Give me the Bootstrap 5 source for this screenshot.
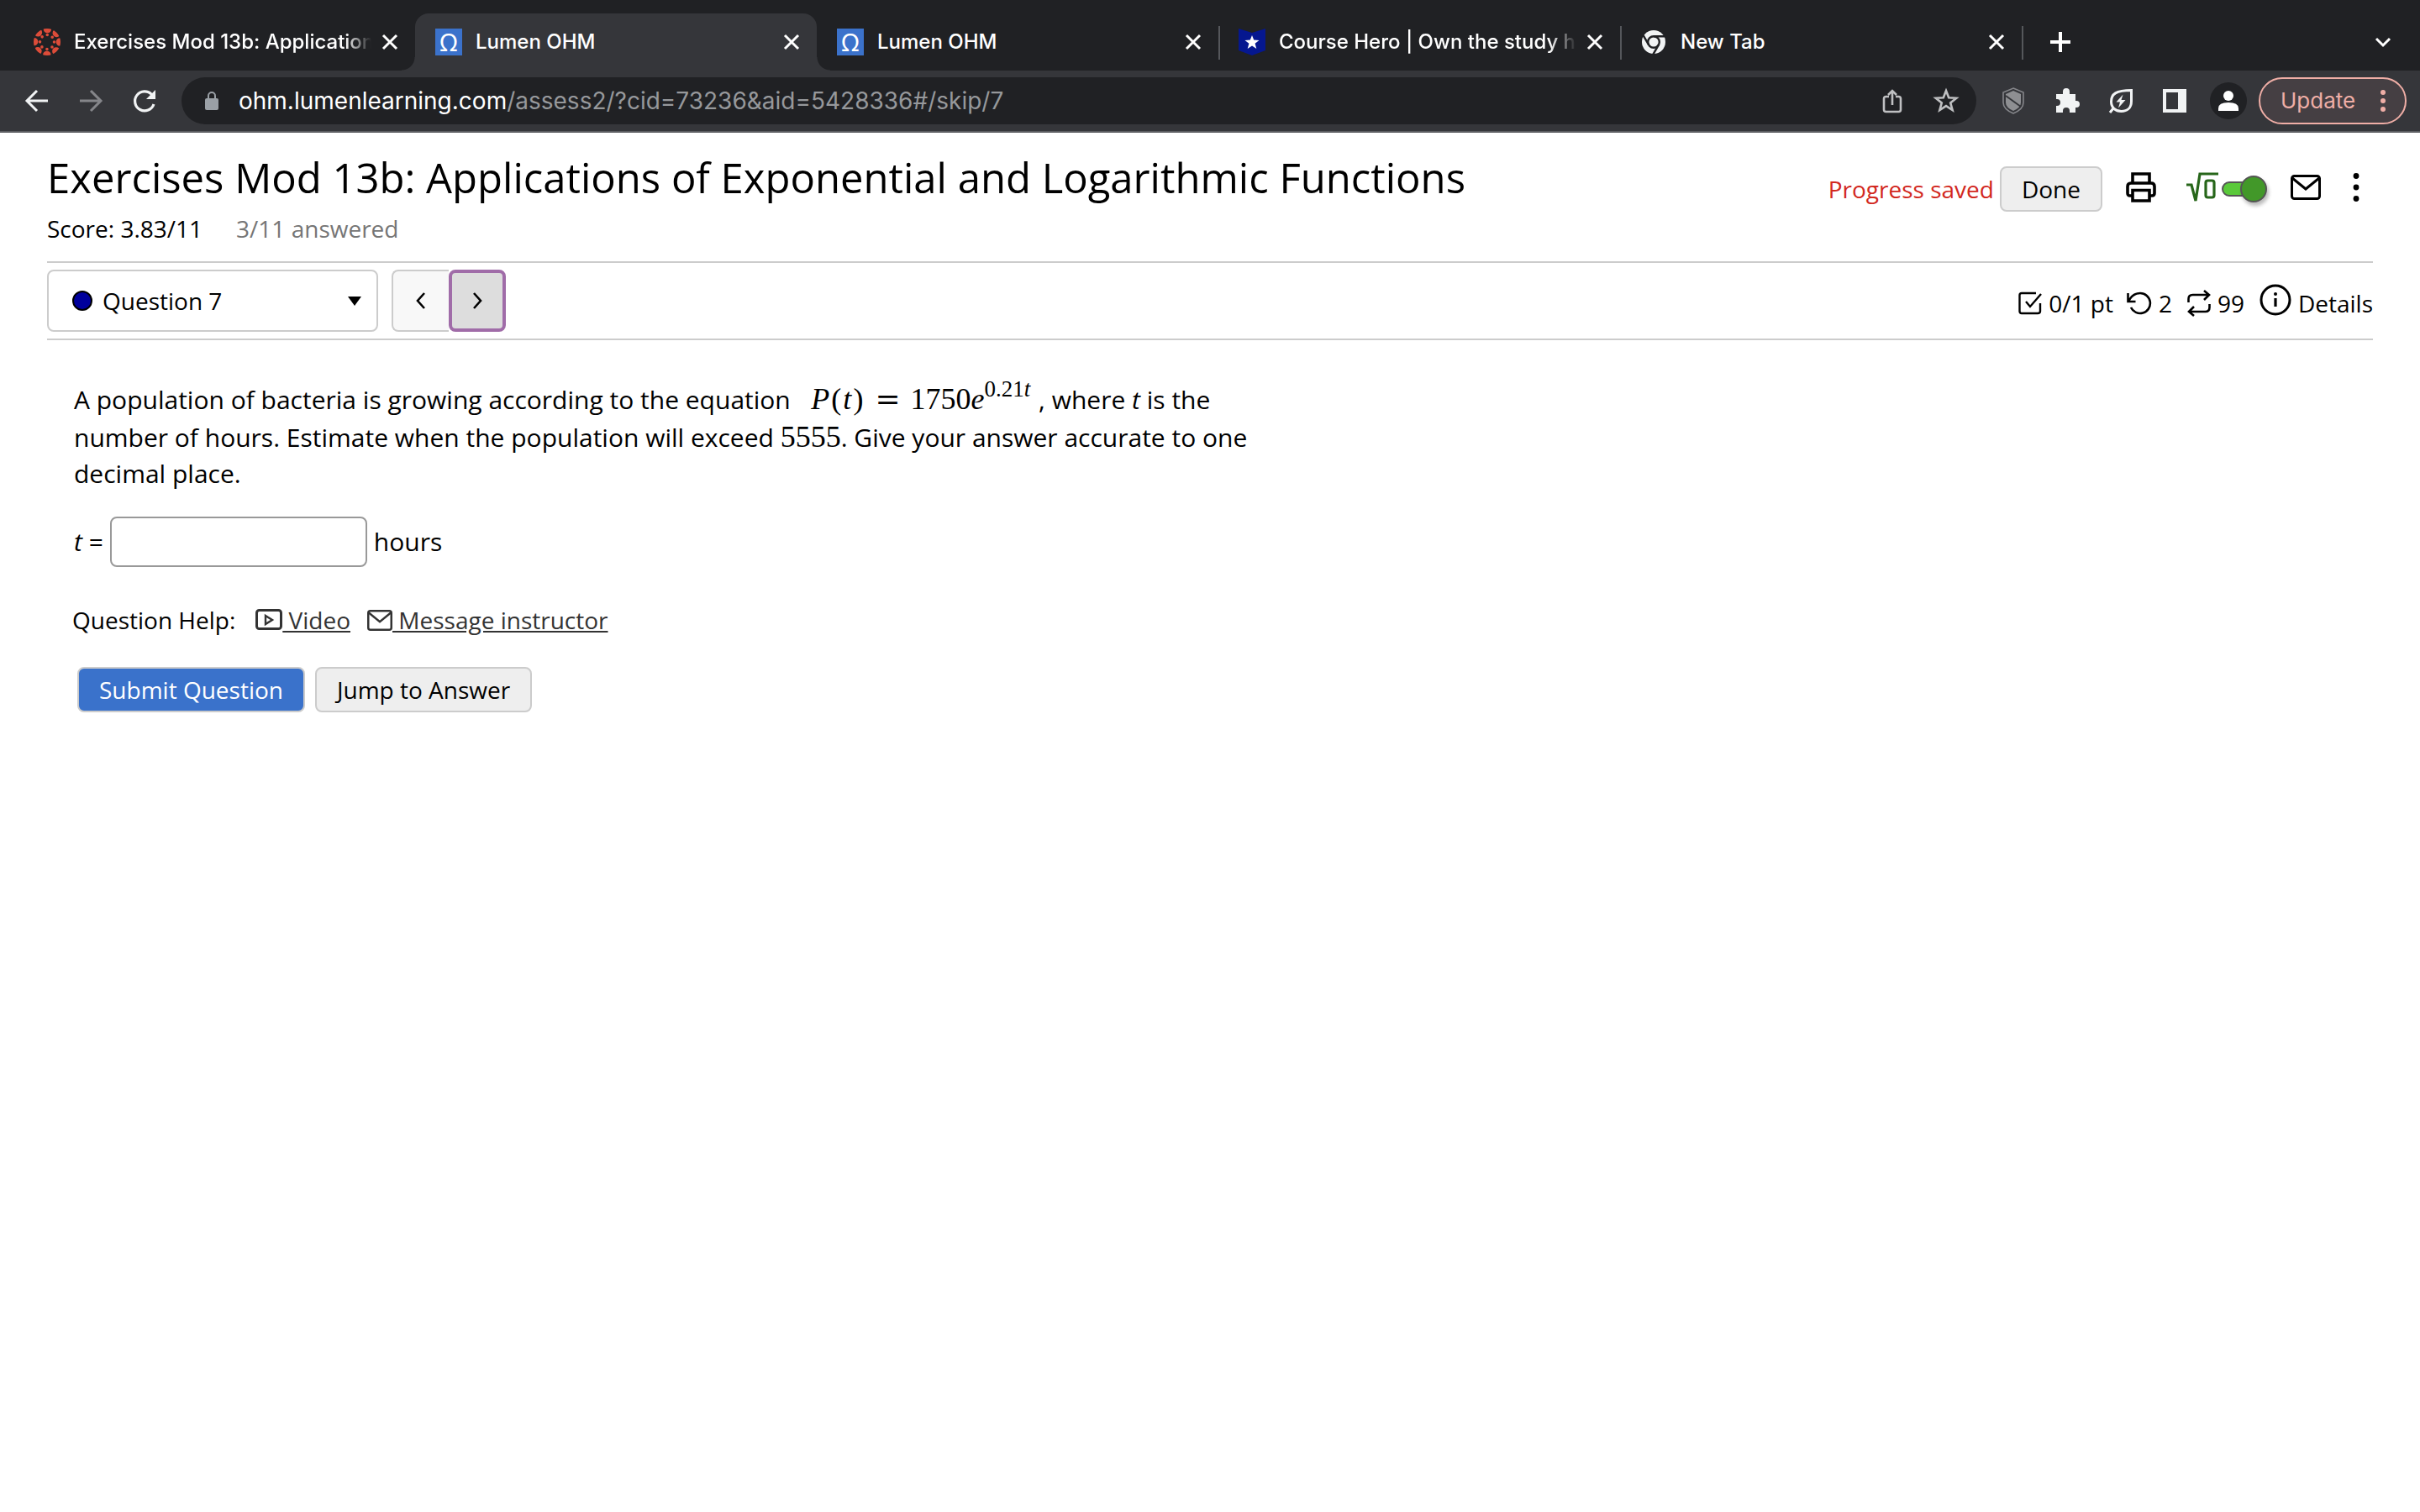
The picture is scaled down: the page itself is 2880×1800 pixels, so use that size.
<!DOCTYPE html>
<html lang="en">
<head>
<meta charset="utf-8">
<meta name="viewport" content="width=device-width, initial-scale=1">
<title>Lumen OHM</title>
<link rel="stylesheet" href="https://cdn.jsdelivr.net/npm/bootstrap@5.3.0/dist/css/bootstrap.min.css">
<style>
body{font-family:"Open Sans","Noto Sans",sans-serif;font-size:28px;line-height:40px;color:#000;background:#fff}
svg{display:block;flex:none}
.chrome{font-family:Inter,Roboto,sans-serif;color:#fff;background:#202124}
.tabstrip{padding:16px 16px 0;height:84px}
.tab{width:478px;height:68px;padding:0 20px 0 24px;gap:16px;font-size:24px;font-weight:500;position:relative}
.tab .caption{flex:1;min-width:0;overflow:hidden;white-space:nowrap}
.tab .caption.faded{margin-right:-4px;-webkit-mask-image:linear-gradient(90deg,#000 91%,transparent);mask-image:linear-gradient(90deg,#000 91%,transparent)}
.tab.current{background:#35363a;border-radius:16px 16px 0 0}
.tab.current::before,.tab.current::after{content:"";position:absolute;bottom:0;width:16px;height:16px}
.tab.current::before{left:-16px;background:radial-gradient(circle at 0 0,transparent 15px,#35363a 16px)}
.tab.current::after{right:-16px;background:radial-gradient(circle at 100% 0,transparent 15px,#35363a 16px)}
.tab.ruled::after{content:"";position:absolute;right:-2px;top:15px;width:2px;height:40px;background:#55575b}
.plain{background:none;border:0;padding:0;color:inherit;display:flex;align-items:center;justify-content:center}
.tab .plain{width:20px;height:32px}
.omega{width:32px;height:32px;background:#3b72cb;font:400 29px/32px "Noto Sans",sans-serif;text-align:center}
.toolbar{height:74px;background:#35363a;border-bottom:2px solid #5c5d61;padding:0 16px 0 12px}
.toolbar .plain{width:64px;height:56px}
.omnibox{height:56px;border-radius:28px;background:#202124;margin:0 12px;padding:0 4px 0 28px;font-size:28px}
.omnibox .rest{color:#96989b}
.avatar{width:44px;height:44px;border-radius:50%;background:#202124;overflow:hidden}
.update{height:56px;width:176px;border:2px solid #efaea6;border-radius:28px;background:#453f43;color:#efaea6;font-size:26px;padding:0 22px 0 24px}
.page{padding:0 56px}
.pagehead{padding:23px 0 19px}
.pagehead h1{font-size:49px;line-height:60px;font-weight:400;margin:0 0 11px}
.soft{color:#767676;margin-left:40px}
.headtools{padding-top:17px}
.headtools .plain{height:54px;padding-bottom:4px}
.saved{color:#d2281e;margin-right:7px}
.btn.act{font-size:28px;line-height:40px;padding:5px 24px;border:2px solid #ccc;border-radius:8px;background:#eee;color:#000}
.btn.act.go{background:#3a72cb;color:#fff}
.rootswitch{appearance:none;width:54px;height:32px;margin:0;position:relative}
.rootswitch::before{content:"";position:absolute;left:0;top:7px;width:44px;height:18px;border:2px solid #555;border-radius:9px;background:#5ac93a}
.rootswitch::after{content:"";position:absolute;right:0;top:0;width:32px;height:32px;border:2px solid #555;border-radius:50%;background:#429829;box-shadow:2px 4px 4px #0004}
.dots{margin-right:10px}
.qbar{border:solid #ccc;border-width:2px 0;padding:8px 0}
.picker{width:394px;height:74px;border:2px solid #ccc;border-radius:8px;padding:0 18px 0 28px;gap:12px}
.picker select{appearance:none;border:0;background:none;flex:1;padding:0;color:#000}
.step{width:68px;height:74px;border:2px solid #ccc;background:#f8f8f8}
.step.prev{border-right:0;border-radius:8px 0 0 8px}
.step.next{background:#ddd;border:4px solid #a06ca8;border-radius:8px}
.status{gap:8px;padding-top:6px}
.status .lead-in{margin-left:10px}
.question{padding:45px 32px 0;font-size:30px;line-height:42px}
.question p{max-width:1420px;margin:0}
.tex{font-family:"Liberation Serif",serif;font-size:36px;line-height:45px;white-space:nowrap}
.tex.formula{margin:0 2px 0 9px}
.tex sup{font-size:27px;line-height:1;top:auto;vertical-align:15px}
.tex .rel{font-family:"DejaVu Serif",serif;line-height:1;margin:0 12px}
.tex .arg{margin:0 2px}
.answer{width:306px;height:60px;border:2px solid #999;border-radius:8px}
.answerrow{padding-top:30px}
.help{padding:43px 0 36px 30px}
.help a{color:#333}
.help .mailto{margin-left:20px}
</style>
<script src="https://cdn.jsdelivr.net/npm/bootstrap@5.3.0/dist/js/bootstrap.bundle.min.js"></script>
</head>
<body>
<svg width="0" height="0" class="position-absolute" aria-hidden="true">
<symbol id="x" viewBox="6 6 20 20"><path d="M8 8l16 16M24 8L8 24" stroke="#fff" stroke-width="3" fill="none"/></symbol>
<symbol id="mail" viewBox="0 0 36 30"><rect x="1.500" y="1.500" width="33" height="27" rx="3" fill="none" stroke="currentColor" stroke-width="3"/><path d="M2 4l16 13L34 4" fill="none" stroke="currentColor" stroke-width="3"/></symbol>
</svg>
<header class="chrome">
<nav class="tabstrip d-flex" aria-label="Tabs">
<div class="tab d-flex align-items-center">
<svg class="rounded-circle" width="32" height="32" viewBox="0 0 32 32" fill="none" stroke="#dc4c39" stroke-linecap="round"><circle cx="16" cy="16" r="15.500" stroke-width="9.600" stroke-dasharray="0 12.174"/><circle cx="16" cy="16" r="8.500" stroke-width="3.600" stroke-dasharray="0 6.676"/></svg>
<span class="caption faded">Exercises Mod 13b: Applications</span>
<button class="plain" aria-label="Close tab"><svg width="20" height="20"><use href="#x"/></svg></button>
</div>
<div class="tab current d-flex align-items-center">
<span class="omega">Ω</span><span class="caption">Lumen OHM</span>
<button class="plain" aria-label="Close tab"><svg width="20" height="20"><use href="#x"/></svg></button>
</div>
<div class="tab ruled d-flex align-items-center">
<span class="omega">Ω</span><span class="caption">Lumen OHM</span>
<button class="plain" aria-label="Close tab"><svg width="20" height="20"><use href="#x"/></svg></button>
</div>
<div class="tab ruled d-flex align-items-center">
<svg width="32" height="32" viewBox="0 0 32 32"><path d="M0 0l16 5L32 0v26l-16 6-16-6z" fill="#05178f"/><path d="M16 8l2.200 5.600 6.300.3-4.900 3.900 1.700 6.200-5.300-3.500-5.300 3.500 1.700-6.200-4.900-3.900 6.300-.3z" fill="#fff"/></svg>
<span class="caption faded">Course Hero | Own the study hour</span>
<button class="plain" aria-label="Close tab"><svg width="20" height="20"><use href="#x"/></svg></button>
</div>
<div class="tab ruled d-flex align-items-center">
<svg width="32" height="32" viewBox="0 0 32 32"><circle cx="16" cy="16" r="14" fill="#f1f3f4"/><circle cx="16" cy="16" r="6.800" fill="none" stroke="#202124" stroke-width="2.400"/><path d="M16 9.200h13M10.100 19.400L3.600 8.200M21.900 19.400L15.400 30.600" stroke="#202124" stroke-width="2.400"/></svg>
<span class="caption">New Tab</span>
<button class="plain" aria-label="Close tab"><svg width="20" height="20"><use href="#x"/></svg></button>
</div>
<div class="d-flex flex-fill align-items-center justify-content-between ps-4 pe-2">
<button class="plain ms-1" aria-label="New tab"><svg width="36" height="36" viewBox="0 0 36 36"><path d="M18 6v24M6 18h24" stroke="#fff" stroke-width="4"/></svg></button>
<button class="plain me-1" aria-label="Search tabs"><svg width="32" height="32" viewBox="0 0 32 32"><path d="M8 12l8 8 8-8" stroke="#fff" stroke-width="3" fill="none"/></svg></button>
</div>
</nav>
<div class="toolbar d-flex align-items-center">
<button class="plain" aria-label="Back"><svg width="32" height="32" viewBox="0 0 32 32"><path d="M29 16H5M16 4L4 16l12 12" stroke="#f1f3f4" stroke-width="3" fill="none"/></svg></button>
<button class="plain" aria-label="Forward"><svg width="32" height="32" viewBox="0 0 32 32"><path d="M3 16h24M16 4l12 12-12 12" stroke="#85868a" stroke-width="3" fill="none"/></svg></button>
<button class="plain" aria-label="Reload"><svg width="32" height="32" viewBox="0 0 32 32"><path d="M27 20a11.500 11.500 0 1 1-2.500-11.500" stroke="#f1f3f4" stroke-width="3.200" fill="none"/><path d="M29 3v11H18z" fill="#f1f3f4"/></svg></button>
<div class="omnibox d-flex align-items-center flex-fill">
<svg width="16" height="24" viewBox="0 0 16 24"><rect y="9" width="16" height="14" rx="2" fill="#9aa0a6"/><path d="M4 10V6a4 4 0 0 1 8 0v4" fill="none" stroke="#9aa0a6" stroke-width="2"/></svg>
<div class="flex-fill ms-4" role="textbox" aria-label="Address">ohm.lumenlearning.com<span class="rest">/assess2/?cid=73236&amp;aid=5428336#/skip/7</span></div>
<button class="plain" aria-label="Share"><svg width="24" height="32" viewBox="0 0 24 32"><path d="M8 11H4.500q-2.500 0-2.500 2.500v13Q2 29 4.500 29h15q2.500 0 2.500-2.500v-13Q22 11 19.500 11H16M12 21V4M7 9l5-5 5 5" fill="none" stroke="#bfc0c2" stroke-width="2.600"/></svg></button>
<button class="plain" aria-label="Bookmark"><svg width="32" height="32" viewBox="0 0 32 32"><path d="M16 4l3.200 8.300 9 .5-7 5.600 2.400 8.600-7.600-4.900L8.400 27l2.400-8.600-7-5.600 9-.5z" fill="none" stroke="#bfc0c2" stroke-width="2.600"/></svg></button>
</div>
<button class="plain" aria-label="Shield"><svg width="26" height="32" viewBox="0 0 26 32"><path d="M13 1l12 5v12q0 8-12 13Q1 26 1 18V6z" fill="none" stroke="#85868a" stroke-width="1.600"/><path d="M13 4l9 4v10q0 6-9 10-9-4-9-10V8z" fill="#8e8f92"/><path d="M4 10l18 13" stroke="#35363a" stroke-width="2"/></svg></button>
<button class="plain" aria-label="Extensions"><svg width="32" height="32" viewBox="0 0 32 32"><path d="M3 8h8V5a4 4 0 0 1 8 0v3h7v8h1a4 4 0 0 1 0 8h-1v6h-7v-2a4 4 0 0 0-8 0v2H3v-8h1a4 4 0 0 0 0-8H3z" fill="#f1f3f4"/></svg></button>
<button class="plain" aria-label="Energy saver"><svg width="32" height="32" viewBox="0 0 32 32"><path d="M28.500 3.500v13c0 8-5 12-12 12S4.500 24 4.500 17C4.500 8 10 3.500 28.500 3.500zM7 25l-4 5" fill="none" stroke="#f1f3f4" stroke-width="3"/><path d="M18.500 8.500l-8 9h4.500l-2 7 8.500-9.500h-5z" fill="#f1f3f4"/></svg></button>
<button class="plain" aria-label="Side panel"><svg width="28" height="28" viewBox="0 0 28 28"><path d="M0 0h28v28H0zM4 4v20h14V4z" fill="#f1f3f4" fill-rule="evenodd"/></svg></button>
<button class="plain" aria-label="Profile"><svg class="avatar" width="44" height="44" viewBox="0 0 44 44"><circle cx="22" cy="16" r="6" fill="#fff"/><path d="M10 34v-3q0-7 12-7t12 7v3z" fill="#fff"/></svg></button>
<button class="update d-flex align-items-center justify-content-between ms-1">Update<svg width="8" height="28" viewBox="0 0 8 28" fill="#efaea6"><circle cx="4" cy="4" r="3"/><circle cx="4" cy="14" r="3"/><circle cx="4" cy="24" r="3"/></svg></button>
</div>
</header>
<main class="page">
<div class="pagehead d-flex justify-content-between align-items-start">
<div>
<h1>Exercises Mod 13b: Applications of Exponential and Logarithmic Functions</h1>
<div class="d-flex"><span>Score: 3.83/11</span><span class="soft">3/11 answered</span></div>
</div>
<div class="headtools d-flex align-items-center">
<span class="saved">Progress saved</span>
<button class="btn act">Done</button>
<button class="plain ms-4 ps-1" aria-label="Print"><svg width="36" height="36" viewBox="0 0 36 36" fill="none" stroke="#000" stroke-width="3.600"><path d="M8 12V2h20v10M8 28H5q-3 0-3-3v-8q0-4 4-4h24q4 0 4 4v8q0 3-3 3h-3M8 21.500h20V34H8z"/></svg></button>
<label class="d-flex align-items-center ms-4 ps-2"><svg class="ms-1 mb-1" width="38" height="36" viewBox="0 0 38 36" fill="none" stroke="#27661a" stroke-width="3.200"><path d="M0 15h6l5 19 5-32h22"/><rect x="23" y="10" width="10" height="20" rx="2.500"/></svg><span class="visually-hidden">Equation editor</span><input class="rootswitch ms-1" type="checkbox" role="switch" checked></label>
<button class="plain ms-4 ps-1" aria-label="Messages"><svg width="36" height="30"><use href="#mail"/></svg></button>
<button class="plain ms-4 ps-2" aria-label="More"><svg class="dots" width="20" height="36" viewBox="0 0 20 36"><circle cx="10" cy="4.500" r="3.400"/><circle cx="10" cy="18" r="3.400"/><circle cx="10" cy="31.500" r="3.400"/></svg></button>
</div>
</div>
<div class="qbar d-flex justify-content-between align-items-center">
<div class="d-flex">
<div class="picker d-flex align-items-center me-3">
<svg width="24" height="24"><circle cx="12" cy="12" r="11" fill="#00009c" stroke="#000" stroke-width="2"/></svg>
<select aria-label="Question"><option>Question 7</option></select>
<svg width="16" height="11"><path d="M0 0h16L8 11z"/></svg>
</div>
<button class="plain step prev" aria-label="Previous"><svg width="14" height="20" viewBox="0 0 14 20"><path d="M11 1L3 10l8 9" fill="none" stroke="#000" stroke-width="2.600"/></svg></button>
<button class="plain step next" aria-label="Next"><svg width="14" height="20" viewBox="0 0 14 20"><path d="M3 1l8 9-8 9" fill="none" stroke="#000" stroke-width="2.600"/></svg></button>
</div>
<div class="status d-flex align-items-center">
<svg width="28" height="28" viewBox="0 0 28 28" fill="none" stroke="#000" stroke-width="2.400"><path d="M21 2H4Q1.500 2 1.500 4.500v19Q1.500 26 4 26h19q3 0 3-2.500V14M9 12l5 6L27 3"/></svg>
<span>0/1 pt</span>
<svg class="ms-2" width="30" height="28" viewBox="0 0 30 28" fill="none" stroke="#000" stroke-width="2.600"><path d="M1.500 2v10h9M2.500 11Q7 2 16 2a12 12 0 1 1-11 17"/></svg>
<span>2</span>
<svg class="lead-in" width="28" height="32" viewBox="0 0 28 32" fill="none" stroke="#000" stroke-width="2.600"><path d="M1.500 15v-4q0-5 5-5H26M20 1l6 5-6 6M26.500 17v4q0 5-5 5H2M8 20l-6 6 6 5"/></svg>
<span>99</span>
<svg class="lead-in mb-2" width="38" height="38" viewBox="0 0 38 38"><circle cx="19" cy="19" r="17" fill="none" stroke="#000" stroke-width="3"/><circle cx="19" cy="12" r="2"/><path d="M19 17v10" stroke="#000" stroke-width="3.200"/></svg>
<span>Details</span>
</div>
</div>
<section class="question">
<p>A population of bacteria is growing according to the equation &nbsp;<span class="tex formula"><i>P</i><span class="arg">(<i class="arg">t</i>)</span><span class="rel">=</span>1750<i>e</i><sup>0.21<i>t</i></sup></span> , where <i>t</i> is the number of hours. Estimate when the population will exceed <span class="tex">5555</span>. Give your answer accurate to one decimal place.</p>
<div class="answerrow d-flex align-items-center">
<label for="ans"><i>t</i> =</label><input id="ans" class="answer mx-2" type="text"><span>hours</span>
</div>
</section>
<div class="help d-flex align-items-center">
<span class="me-4">Question Help:</span>
<a href="#" class="d-flex align-items-center"><svg width="32" height="26" viewBox="0 0 32 26" fill="none" stroke="#333" stroke-width="3"><rect x="1.500" y="1.500" width="29" height="22" rx="3"/><path d="M12 8l8 5-8 5z" stroke-width="2.400"/></svg><span>&nbsp;Video</span></a>
<a href="#" class="mailto d-flex align-items-center"><svg width="30" height="25"><use href="#mail"/></svg><span>&nbsp;Message instructor</span></a>
</div>
<div class="d-flex ms-4 ps-2">
<button class="btn act go ms-1 me-2">Submit Question</button>
<button class="btn act ms-1">Jump to Answer</button>
</div>
</main>
</body>
</html>
